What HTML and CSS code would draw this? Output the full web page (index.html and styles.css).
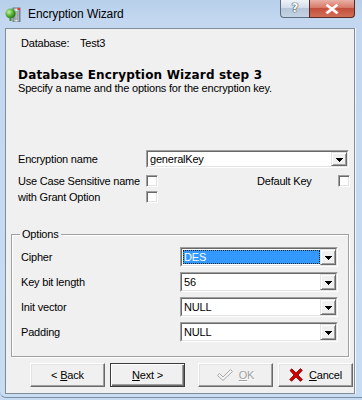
FILE: index.html
```html
<!DOCTYPE html>
<html>
<head>
<meta charset="utf-8">
<title>Encryption Wizard</title>
<link rel="stylesheet" href="styles.css">
</head>
<body>
<div class="window">
  <div class="titlebar">
    <svg class="app-icon" width="16" height="16" viewBox="0 0 16 16">
      <defs>
        <radialGradient id="g1" cx="0.35" cy="0.35" r="0.7">
          <stop offset="0" stop-color="#c8f0a8"/>
          <stop offset="0.6" stop-color="#4caf2c"/>
          <stop offset="1" stop-color="#1f6e12"/>
        </radialGradient>
        <linearGradient id="g2" x1="0" y1="0" x2="1" y2="0">
          <stop offset="0" stop-color="#9aa3ad"/>
          <stop offset="0.5" stop-color="#e8ecf0"/>
          <stop offset="1" stop-color="#7d8690"/>
        </linearGradient>
      </defs>
      <rect x="8" y="2" width="7" height="14" fill="url(#g2)" stroke="#5d6670" stroke-width="0.8"/>
      <path d="M10 5v9M12 5v9" stroke="#5d6670" stroke-width="0.8"/>
      <rect x="12.5" y="2" width="2.5" height="2" fill="#e03a2a"/>
      <circle cx="5.5" cy="7.5" r="5" fill="url(#g1)"/>
      <rect x="4.5" y="11" width="2" height="4" fill="#3b8f24"/>
    </svg>
    <span class="title">Encryption Wizard</span>
    <div class="caption-btns">
      <div class="cap-help">?</div>
      <div class="cap-close">
        <svg width="14" height="10" viewBox="0 0 14 10">
          <path d="M2 1l10 8M12 1L2 9" stroke="#ff6a5a" stroke-width="4.5" stroke-linecap="round" opacity="0.6"/>
          <path d="M2.5 1.5l9 7M11.5 1.5l-9 7" stroke="#ffffff" stroke-width="2.6" stroke-linecap="square"/>
        </svg>
      </div>
    </div>
  </div>

  <div class="client">
    <div class="db-line"><span class="db-label">Database:</span><span>Test3</span></div>
    <div class="heading">Database Encryption Wizard step 3</div>
    <div class="subtitle">Specify a name and the options for the encryption key.</div>

    <div class="form">
      <div class="row row-name">
        <span class="lbl">Encryption name</span>
        <div class="combo combo-name">
          <div class="combo-in">
            <span class="val">generalKey</span>
            <span class="drop"><svg width="7" height="4" viewBox="0 0 7 4"><path d="M0 0h7v1H0zM1 1h5v1H1zM2 2h3v1H2zM3 3h1v1H3z" fill="#000"/></svg></span>
          </div>
        </div>
      </div>
      <div class="row row-check">
        <span class="lbl">Use Case Sensitive name</span>
        <span class="chk"></span>
        <span class="lbl-default">Default Key</span>
        <span class="chk"></span>
      </div>
      <div class="row row-check row-grant">
        <span class="lbl">with Grant Option</span>
        <span class="chk"></span>
      </div>
    </div>

    <div class="group">
      <span class="legend">Options</span>
      <div class="grow">
        <span class="glbl">Cipher</span>
        <div class="combo combo-opt">
          <div class="combo-in">
            <span class="val sel">DES</span>
            <span class="drop"><svg width="7" height="4" viewBox="0 0 7 4"><path d="M0 0h7v1H0zM1 1h5v1H1zM2 2h3v1H2zM3 3h1v1H3z" fill="#000"/></svg></span>
          </div>
        </div>
      </div>
      <div class="grow">
        <span class="glbl">Key bit length</span>
        <div class="combo combo-opt">
          <div class="combo-in">
            <span class="val">56</span>
            <span class="drop"><svg width="7" height="4" viewBox="0 0 7 4"><path d="M0 0h7v1H0zM1 1h5v1H1zM2 2h3v1H2zM3 3h1v1H3z" fill="#000"/></svg></span>
          </div>
        </div>
      </div>
      <div class="grow">
        <span class="glbl">Init vector</span>
        <div class="combo combo-opt">
          <div class="combo-in">
            <span class="val">NULL</span>
            <span class="drop"><svg width="7" height="4" viewBox="0 0 7 4"><path d="M0 0h7v1H0zM1 1h5v1H1zM2 2h3v1H2zM3 3h1v1H3z" fill="#000"/></svg></span>
          </div>
        </div>
      </div>
      <div class="grow">
        <span class="glbl">Padding</span>
        <div class="combo combo-opt">
          <div class="combo-in">
            <span class="val">NULL</span>
            <span class="drop"><svg width="7" height="4" viewBox="0 0 7 4"><path d="M0 0h7v1H0zM1 1h5v1H1zM2 2h3v1H2zM3 3h1v1H3z" fill="#000"/></svg></span>
          </div>
        </div>
      </div>
    </div>

    <div class="buttons">
      <div class="btn"><span>&lt; <u>B</u>ack</span></div>
      <div class="btn btn-default"><span><u>N</u>ext &gt;</span></div>
      <div class="btn btn-ok disabled">
        <svg class="ico-check" width="17" height="12" viewBox="0 0 17 12">
          <path d="M0.5 6.5L2.5 4.5L6 8L13.5 0.5L15.5 2.5L6 11.5Z" fill="#f4f4f4" stroke="#a8a8a8" stroke-width="1" stroke-linejoin="miter"/>
        </svg>
        <span><u>O</u>K</span>
      </div>
      <div class="btn btn-cancel">
        <svg class="ico-x" width="14" height="14" viewBox="0 0 14 14">
          <path d="M1 2.5L2.8 0.8L7 5L11.4 0.6L13.3 2.4L9 7L13.4 11.5L11.5 13.4L7 9L2.6 13.3L0.7 11.4L5 7Z" fill="#d40000" stroke="#7a0000" stroke-width="0.8" stroke-linejoin="round"/>
        </svg>
        <span><u>C</u>ancel</span>
      </div>
    </div>
  </div>
</div>
</body>
</html>
```

FILE: styles.css
```css
html, body {
  margin: 0;
  padding: 0;
  overflow: hidden;
}

body {
  width: 362px;
  height: 400px;
  background: #c6daf1;
  font-family: "Liberation Sans", Arial, sans-serif;
  font-size: 11px;
  color: #000;
}

.window {
  width: 362px;
  height: 398px;
  box-sizing: border-box;
  background: linear-gradient(to bottom, #b7cfea 0px, #c3d8f0 20px, #c8dcf2 100%);
  border-bottom: 1px solid #7c8ea3;
  border-radius: 0 0 0 6px;
}

/* ---------- title bar ---------- */
.titlebar {
  height: 28px;
  display: flex;
  align-items: center;
  padding-left: 5px;
}

.app-icon {
  display: block;
  flex: none;
}

.title {
  margin-left: 7px;
  font-family: "Liberation Sans", Arial, sans-serif;
  font-size: 12px;
  color: #000;
  letter-spacing: -0.1px;
}

.caption-btns {
  margin-left: auto;
  margin-right: 7px;
  align-self: flex-start;
  display: flex;
}

.cap-help {
  width: 29px;
  height: 18px;
  box-sizing: border-box;
  border: 1px solid #5e6e82;
  border-top: none;
  border-right: none;
  border-radius: 0 0 0 4px;
  background: linear-gradient(to bottom, #eef3f8 0%, #d3deea 45%, #b6c6d8 50%, #c3d3e4 100%);
  color: #fff;
  font-family: "DejaVu Sans", sans-serif;
  font-weight: bold;
  font-size: 12px;
  line-height: 17px;
  text-align: center;
  text-shadow: 0 0 1px #33404f, 0 0 1px #33404f, 0 0 1px #33404f;
}

.cap-close {
  width: 46px;
  height: 18px;
  box-sizing: border-box;
  border: 1px solid #5b2a22;
  border-top: none;
  border-radius: 0 0 4px 0;
  background: linear-gradient(to bottom, #e9b1a6 0%, #d77a68 45%, #c3503c 50%, #cf6e58 100%);
  display: flex;
  align-items: center;
  justify-content: center;
}

.cap-close svg {
  display: block;
}

/* ---------- client area ---------- */
.client {
  margin: 0 7px 0 5px;
  height: 366px;
  box-sizing: border-box;
  border: 1px solid #7f8c9c;
  background: #f0f0f0;
  box-shadow: 1px 0 0 #f4f8fc;
  display: flex;
  flex-direction: column;
  letter-spacing: -0.2px;
}

.db-line {
  margin-top: 7px;
  height: 14px;
  line-height: 14px;
  padding-left: 15px;
  display: flex;
}

.db-label {
  width: 59px;
}

.heading {
  margin-top: 18px;
  padding-left: 12px;
  font-family: "DejaVu Sans", Verdana, sans-serif;
  font-weight: bold;
  font-size: 12px;
  line-height: 14px;
  letter-spacing: 0.18px;
}

.subtitle {
  margin-top: 1px;
  padding-left: 12px;
  line-height: 11px;
  white-space: nowrap;
}

/* ---------- form ---------- */
.form {
  margin-top: 56px;
  padding-left: 12px;
  padding-right: 5px;
}

.row {
  display: flex;
  align-items: center;
}

.lbl {
  width: 128px;
  flex: none;
  white-space: nowrap;
}

.row-name {
  height: 18px;
}

.row-check {
  height: 14px;
  margin-top: 6px;
}

.row-grant {
  margin-top: 2px;
}

.lbl-default {
  margin-left: 99px;
  width: 81px;
  flex: none;
}

.chk {
  width: 12px;
  height: 12px;
  box-sizing: border-box;
  border: 1px solid;
  border-color: #a0a0a0 #ffffff #ffffff #a0a0a0;
  box-shadow: inset 1px 1px 0 #696969, inset -1px -1px 0 #e3e3e3;
  background: #fff;
  flex: none;
}

/* ---------- combo boxes ---------- */
.combo {
  box-sizing: border-box;
  border: 1px solid;
  border-color: #a0a0a0 #ffffff #ffffff #a0a0a0;
  flex: 1;
}

.combo-name {
  height: 18px;
}

.combo-opt {
  height: 20px;
}

.combo-in {
  height: 100%;
  box-sizing: border-box;
  border: 1px solid;
  border-color: #696969 #e3e3e3 #e3e3e3 #696969;
  background: #fff;
  display: flex;
  align-items: stretch;
}

.val {
  flex: 1;
  padding-left: 2px;
  display: flex;
  align-items: center;
  white-space: nowrap;
}

.val.sel {
  margin: 1px 0 1px 1px;
  background: #3399ff;
  color: #fff;
  outline: 1px dotted #222;
  outline-offset: -1px;
  padding-left: 1px;
}

.drop {
  width: 16px;
  flex: none;
  box-sizing: border-box;
  border: 1px solid;
  border-color: #e3e3e3 #696969 #696969 #e3e3e3;
  box-shadow: inset 1px 1px 0 #ffffff, inset -1px -1px 0 #a0a0a0;
  background: #f0f0f0;
  display: flex;
  align-items: center;
  justify-content: center;
  padding-top: 1px;
}

.drop svg {
  display: block;
}

/* ---------- options group ---------- */
.group {
  position: relative;
  margin: 30px 5px 0 5px;
  padding: 12px 10px 14px 9px;
  border: 1px solid #a0a0a0;
  box-shadow: inset 1px 1px 0 #ffffff, 1px 1px 0 #ffffff;
  display: flex;
  flex-direction: column;
  gap: 5px;
}

.legend {
  position: absolute;
  top: -7px;
  left: 8px;
  padding: 0 2px;
  background: #f0f0f0;
  line-height: 13px;
}

.grow {
  display: flex;
  align-items: center;
  height: 20px;
}

.glbl {
  width: 159px;
  flex: none;
  white-space: nowrap;
}

/* ---------- buttons ---------- */
.buttons {
  margin-top: 6px;
  padding-left: 24px;
  display: flex;
  gap: 5px;
}

.btn {
  width: 75px;
  height: 24px;
  box-sizing: border-box;
  border: 1px solid;
  border-color: #ffffff #696969 #696969 #ffffff;
  box-shadow: inset -1px -1px 0 #a0a0a0, inset 1px 1px 0 #e3e3e3;
  background: #f0f0f0;
  display: flex;
  align-items: center;
  justify-content: center;
  gap: 5px;
  white-space: nowrap;
  font-size: 11px;
}

.btn-default {
  border: 1px solid #3c3c3c;
  box-shadow: inset 1px 1px 0 #ffffff, inset -1px -1px 0 #696969, inset -2px -2px 0 #a0a0a0;
}

.btn-ok {
  margin-left: 8px;
}

.disabled {
  color: #a0a0a0;
  text-shadow: 1px 1px 0 #ffffff;
}

.ico-check,
.ico-x {
  display: block;
  flex: none;
}

.btn-cancel {
  gap: 6px;
}
```
